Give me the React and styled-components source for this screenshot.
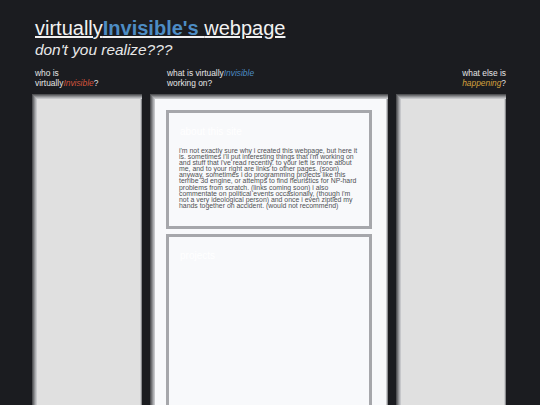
import styled, { createGlobalStyle } from "styled-components";

const GlobalStyle = createGlobalStyle`
  html, body {
    margin: 0;
    padding: 0;
    background: #1b1c20;
    overflow: hidden;
  }
  body {
    font-family: "Liberation Sans", Arial, sans-serif;
  }
`;

const Page = styled.div`
  padding: 17px 0 0 32px;
  width: 474px;
`;

const Title = styled.h1`
  margin: 0 0 0 3px;
  font-size: 20px;
  line-height: 23px;
  font-weight: normal;
  color: #f2f2f2;
  text-decoration: underline;
  text-underline-offset: 1px;
  > b {
    color: #4d8cc4;
  }
`;

const Subtitle = styled.h2`
  margin: 1px 0 0 3px;
  font-size: 15.4px;
  line-height: 17px;
  font-weight: normal;
  font-style: italic;
  color: #e8e8e8;
`;

const Grid = styled.div`
  display: grid;
  grid-template-columns: 110px 238px 110px;
  column-gap: 8px;
`;

const Labels = styled(Grid)`
  margin-top: 10px;
  height: 20px;
`;

const Label = styled.div`
  font-size: 8.4px;
  line-height: 10px;
  color: #e6e6e6;
  padding-left: ${(p) => p.$indent || 0}px;
  text-align: ${(p) => p.$align || "left"};
  > i {
    color: ${(p) => p.$accent};
  }
`;

const Columns = styled(Grid)`
  margin-top: 6px;
  height: 330px;
`;

const Column = styled.div`
  background: ${(p) => p.$bg};
  box-shadow: inset 1px 1px 0 #505154, inset 2px 2px 0 #6f7073,
    inset 3px 3px 0 #8f9093, inset 4px 4px 0 #adaeb1, inset 5px 5px 0 #c6c7ca,
    inset -1px 0 0 #8a8b8e, inset -2px 0 0 #c9cacc;
  padding: 16px 16px 0 16px;
  display: flex;
  flex-direction: column;
  gap: 5px;
`;

const Card = styled.section`
  border: 3px solid #a6a7ab;
  background: #f8f9fb;
  padding: 13px 9px 17px 10px;
  min-height: ${(p) => p.$min || 0}px;
`;

const CardTitle = styled.h3`
  margin: 0 0 10px 1px;
  font-size: 10px;
  line-height: 12px;
  font-weight: normal;
  color: #ffffff;
`;

const CardText = styled.p`
  margin: 0;
  font-size: 6.9px;
  line-height: 6.1px;
  color: #4f5053;
`;

export default function App() {
  return (
    <>
      <GlobalStyle />
      <Page>
        <Title>
          virtually<b>Invisible's </b>webpage
        </Title>
        <Subtitle>don't you realize???</Subtitle>
        <Labels>
          <Label $indent={3} $accent="#d5553d">
            who is
            <br />
            virtually<i>Invisible</i>?
          </Label>
          <Label $indent={17} $accent="#4d8cc4">
            what is virtually<i>Invisible</i>
            <br />
            working on?
          </Label>
          <Label $align="right" $accent="#d6a23e">
            what else is
            <br />
            <i>happening</i>?
          </Label>
        </Labels>
        <Columns>
          <Column $bg="#e0e0e0" />
          <Column $bg="#f8f9fb">
            <Card>
              <CardTitle>about this site</CardTitle>
              <CardText>
                i'm not exactly sure why i created this webpage, but here it
                is. sometimes i'll put interesting things that i'm working on
                and stuff that i've read recently. to your left is more about
                me, and to your right are links to other pages. (soon) anyway,
                sometimes i do programming projects like this terribe 3d
                engine, or attemps to find heuristics for NP-hard problems
                from scratch. (links coming soon) i also commentate on
                political events occasionally, (though i'm not a very
                ideological person) and once i even ziptied my hands together
                on accident. (would not recommend)
              </CardText>
            </Card>
            <Card $min={200}>
              <CardTitle>projects</CardTitle>
            </Card>
          </Column>
          <Column $bg="#e0e0e0" />
        </Columns>
      </Page>
    </>
  );
}
